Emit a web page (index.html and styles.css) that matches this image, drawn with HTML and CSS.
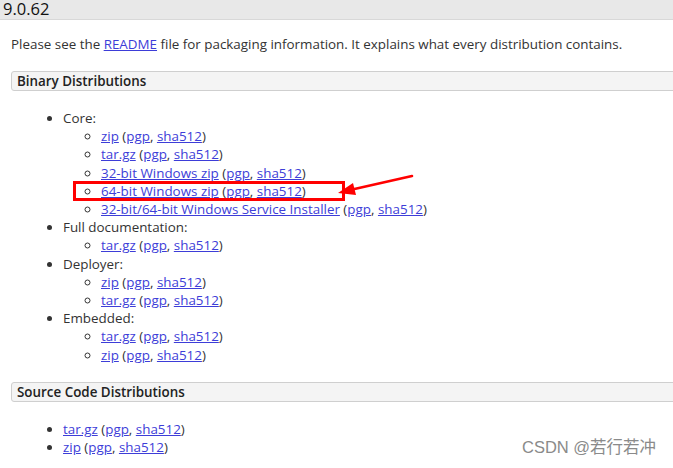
FILE: index.html
```html
<!DOCTYPE html>
<html>
<head>
<meta charset="utf-8">
<link rel="stylesheet" href="styles.css">
</head>
<body>
<div class="header">9.0.62</div>
<div class="content">
  <p class="intro">Please see the <a href="#">README</a> file for packaging information. It explains what every distribution contains.</p>
  <div class="section">Binary Distributions</div>
  <ul class="list">
    <li>Core:
      <ul class="sub">
        <li><a href="#">zip</a> (<a href="#">pgp</a>, <a href="#">sha512</a>)</li>
        <li><a href="#">tar.gz</a> (<a href="#">pgp</a>, <a href="#">sha512</a>)</li>
        <li><a href="#">32-bit Windows zip</a> (<a href="#">pgp</a>, <a href="#">sha512</a>)</li>
        <li><a href="#">64-bit Windows zip</a> (<a href="#">pgp</a>, <a href="#">sha512</a>)</li>
        <li><a href="#">32-bit/64-bit Windows Service Installer</a> (<a href="#">pgp</a>, <a href="#">sha512</a>)</li>
      </ul>
    </li>
    <li>Full documentation:
      <ul class="sub">
        <li><a href="#">tar.gz</a> (<a href="#">pgp</a>, <a href="#">sha512</a>)</li>
      </ul>
    </li>
    <li>Deployer:
      <ul class="sub">
        <li><a href="#">zip</a> (<a href="#">pgp</a>, <a href="#">sha512</a>)</li>
        <li><a href="#">tar.gz</a> (<a href="#">pgp</a>, <a href="#">sha512</a>)</li>
      </ul>
    </li>
    <li>Embedded:
      <ul class="sub">
        <li><a href="#">tar.gz</a> (<a href="#">pgp</a>, <a href="#">sha512</a>)</li>
        <li><a href="#">zip</a> (<a href="#">pgp</a>, <a href="#">sha512</a>)</li>
      </ul>
    </li>
  </ul>
  <div class="section">Source Code Distributions</div>
  <ul class="list">
    <li><a href="#">tar.gz</a> (<a href="#">pgp</a>, <a href="#">sha512</a>)</li>
    <li><a href="#">zip</a> (<a href="#">pgp</a>, <a href="#">sha512</a>)</li>
  </ul>
</div>
<div class="highlight"></div>
<svg class="arrow" width="80" height="30" viewBox="0 0 80 30">
  <line x1="76" y1="3" x2="14" y2="17" stroke="#f00" stroke-width="2.6" stroke-linecap="round"/>
  <polygon points="2,20 17,10 20,22" fill="#f00"/>
</svg>
<div class="watermark">CSDN @若行若冲</div>
</body>
</html>
```
FILE: styles.css
```css
html, body {
  margin: 0;
  padding: 0;
  background: #fff;
}
body {
  font-family: "Open Sans", "Noto Sans", sans-serif;
  font-size: 13.4px;
  color: #333;
  position: relative;
  width: 673px;
  height: 468px;
  overflow: hidden;
}
.header {
  height: 19px;
  line-height: 18px;
  background: #e8e8e8;
  border-bottom: 1px solid #d8d8d8;
  padding-left: 3px;
  font-size: 16.5px;
  color: #111;
}
.content {
  padding-left: 11px;
}
.intro {
  margin: 15px 0 0;
  line-height: 18px;
}
a {
  color: #3d3dd8;
  text-decoration: underline;
}
.section {
  margin-top: 18px;
  margin-right: -10px;
  height: 18px;
  line-height: 18px;
  border: 1px solid #cfcfcf;
  border-radius: 3px;
  background: #f4f4f4;
  padding-left: 5px;
  font-weight: 600;
  color: #222;
}
.list {
  margin: 18px 0 17px;
  padding-left: 52px;
  line-height: 18.2px;
  list-style: disc;
}
.sub {
  margin: 0;
  padding-left: 38px;
  list-style: circle;
}
.highlight {
  position: absolute;
  left: 73px;
  top: 181px;
  width: 266px;
  height: 14px;
  border: 3px solid #f00;
}
.arrow {
  position: absolute;
  left: 336px;
  top: 173px;
}
.watermark {
  position: absolute;
  left: 522px;
  top: 437px;
  font-family: "Liberation Sans", "Noto Sans CJK SC", sans-serif;
  font-size: 16.5px;
  line-height: 20px;
  color: #8a8a8a;
}
```
